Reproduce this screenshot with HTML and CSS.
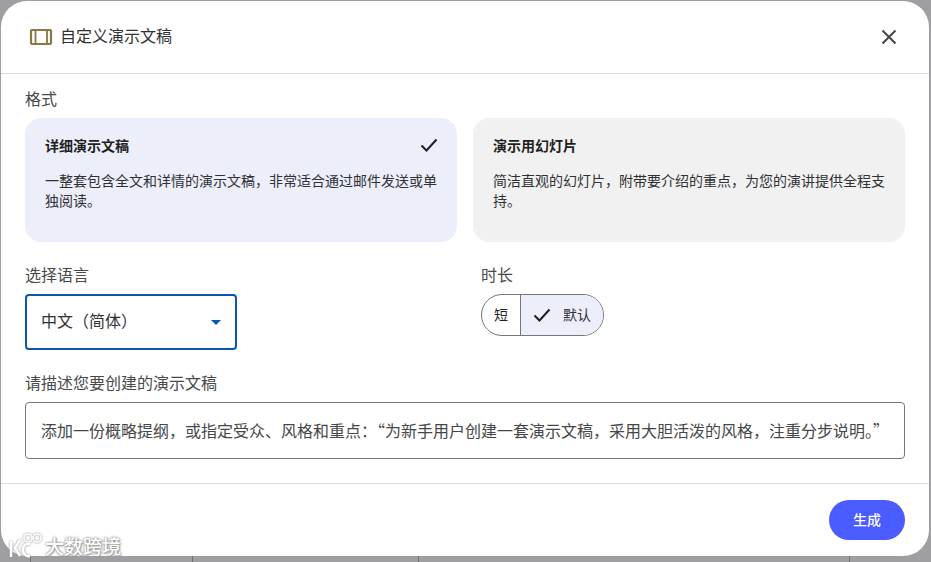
FILE: index.html
```html
<!DOCTYPE html>
<html lang="zh-CN">
<head>
<meta charset="utf-8">
<title>自定义演示文稿</title>
<link rel="stylesheet" href="styles.css">
</head>
<body>
<div class="dialog">
  <header class="head">
    <svg class="slides-icon" width="24" height="18" viewBox="0 0 24 18" fill="none" stroke="#8a7646" stroke-width="2.200"><rect x="2" y="2" width="20" height="14" rx="1"/><path d="M6.500 2v14M18 2v14" stroke-width="1.800"/></svg>
    <h1 class="title">自定义演示文稿</h1>
    <svg class="close" width="18" height="18" viewBox="0 0 18 18" stroke="#44474a" stroke-width="2" fill="none"><path d="M2.500 2.500l13 13M15.500 2.500l-13 13"/></svg>
  </header>
  <main class="content">
    <div class="label format-label">格式</div>
    <div class="cards">
      <section class="card card-on">
        <div class="card-top"><h2 class="card-title">详细演示文稿</h2>
          <svg class="check" width="20" height="20" viewBox="0 0 20 20" fill="none" stroke="#1f1f1f" stroke-width="2"><path d="M2.500 10.500l5 5 10-11"/></svg></div>
        <p class="card-text">一整套包含全文和详情的演示文稿，非常适合通过邮件发送或单独阅读。</p>
      </section>
      <section class="card card-off">
        <div class="card-top"><h2 class="card-title">演示用幻灯片</h2></div>
        <p class="card-text">简洁直观的幻灯片，附带要介绍的重点，为您的演讲提供全程支持。</p>
      </section>
    </div>
    <div class="options">
      <div class="opt-lang">
        <div class="label">选择语言</div>
        <div class="select"><span class="select-text">中文（简体）</span><i class="caret"></i></div>
      </div>
      <div class="opt-len">
        <div class="label">时长</div>
        <div class="toggle">
          <span class="seg seg-short">短</span>
          <span class="seg seg-default"><svg width="20" height="20" viewBox="0 0 20 20" fill="none" stroke="#1f1f1f" stroke-width="2"><path d="M2.500 10.500l5 5 10-11"/></svg><b class="seg-text">默认</b></span>
        </div>
      </div>
    </div>
    <div class="label prompt-label">请描述您要创建的演示文稿</div>
    <div class="prompt">添加一份概略提纲，或指定受众、风格和重点：“为新手用户创建一套演示文稿，采用大胆活泼的风格，注重分步说明。”</div>
  </main>
  <footer class="foot"><button class="gen">生成</button></footer>
</div>
<div class="behind"><span class="b1"></span><span class="b2"></span><span class="b3"></span><span class="b4"></span></div>
<div class="mark">
  <svg width="36" height="26" viewBox="0 0 36 26" fill="none" stroke="#fff" stroke-width="2.500"><path d="M4 9v16M13 8l-5 8 5 8M23 12c-5-1-7 2-7 6s3 7 7 6"/><circle cx="21" cy="6" r="4" stroke-width="1.600"/><circle cx="30" cy="6" r="4" stroke-width="1.600"/></svg>
  <span class="mark-text">大数跨境</span>
</div>
</body>
</html>
```

FILE: styles.css
```css
* { box-sizing: border-box; }
html, body { margin: 0; height: 100%; }
body {
  width: 931px; height: 562px; overflow: hidden; position: relative;
  background: #9f9fa3;
  font-family: "Noto Sans CJK SC", "Noto Sans", sans-serif;
  color: #1f1f1f;
  padding: 1px 2px 0 1px;
}
.dialog {
  width: 928px; height: 555px; background: #fff; border-radius: 26px;
  display: flex; flex-direction: column; position: relative; z-index: 1;
}
.head {
  height: 73px; flex: none; display: flex; align-items: center;
  padding: 0 31px 1px 28px; border-bottom: 1px solid #dadce0;
}
.slides-icon { flex: none; }
.title { margin: 0 0 3px 7px; font-size: 16px; font-weight: 400; color: #303134; flex: 1; line-height: 24px; }
.close { flex: none; }
.content { flex: 1; padding: 0 24px; }
.label { font-size: 16px; line-height: 22px; color: #48494b; }
.format-label { margin-top: 13px; }
.cards { display: flex; gap: 16px; margin-top: 9px; }
.card { width: 432px; height: 124px; border-radius: 16px; padding: 15px 19px 0 20px; }
.card-on { background: #eceefa; }
.card-off { background: #f1f1f1; }
.card-top { display: flex; justify-content: space-between; align-items: center; height: 24px; }
.card-title { margin: 0; font-size: 14px; font-weight: 700; color: #1f1f1f; line-height: 24px; }
.check { flex: none; margin-right: -1px; }
.card-text { margin: 13px 0 0; font-size: 14px; line-height: 20px; color: #303134; }
.options { display: flex; margin-top: 21px; }
.opt-lang { width: 456px; }
.select {
  width: 212px; height: 56px; margin-top: 9px; border: 2px solid #0b57b0; border-radius: 4px;
  display: flex; align-items: center; justify-content: space-between; padding: 0 14px;
  font-size: 16px; color: #303134;
}
.select-text { margin-bottom: 4px; }
.caret { width: 0; height: 0; border: 5.500px solid transparent; border-top: 5.500px solid #0b57b0; border-bottom: 0; }
.toggle {
  display: flex; width: 123px; height: 42px; margin-top: 9px; border: 1px solid #747775; border-radius: 21px; overflow: hidden;
}
.seg { display: flex; align-items: center; font-size: 14px; color: #1f1f1f; }
.seg-short { width: 39px; justify-content: center; border-right: 1px solid #747775; padding-bottom: 2px; }
.seg-default { flex: 1; background: #eceefa; padding-left: 11px; }
.seg-text { font-weight: 400; font-size: 14px; margin-left: 11px; margin-bottom: 2px; color: #303134; }
.prompt-label { margin-top: 21px; }
.prompt {
  height: 57px; margin-top: 9px; border: 1px solid #747775; border-radius: 4px;
  padding: 0 0 2px 15px; display: flex; align-items: center; font-size: 16px; white-space: nowrap; color: #444746; overflow: hidden;
  font-feature-settings: "fwid";
}
.foot {
  height: 73px; flex: none; border-top: 1px solid #dadce0; display: flex; justify-content: flex-end;
  padding: 16px 24px 0 0;
}
.gen {
  width: 76px; height: 40px; border: 0; border-radius: 20px; background: #4a5bff; color: #fff;
  font: 500 14px "Noto Sans CJK SC", sans-serif; padding: 0 0 2px;
}
.behind { position: absolute; left: 0; right: 0; top: 556px; height: 6px; }
.behind span { position: absolute; top: 0; bottom: 0; width: 1px; background: #6f6f72; }
.b1 { left: 30px; } .b2 { left: 192px; } .b3 { left: 418px; } .b4 { left: 849px; }
.mark {
  position: absolute; z-index: 2; left: 7px; top: 531px; display: flex; align-items: center; gap: 2px;
  color: #fff; font-size: 19px; line-height: 26px;
  text-shadow: 0 0 2px #8e8e8e, 0 0 3px #a8a8a8, 1px 1px 2px #999;
}
.mark svg { filter: drop-shadow(0 0 1px #888); flex: none; }
.mark-text { font-weight: 500; padding-top: 2px; }
```
